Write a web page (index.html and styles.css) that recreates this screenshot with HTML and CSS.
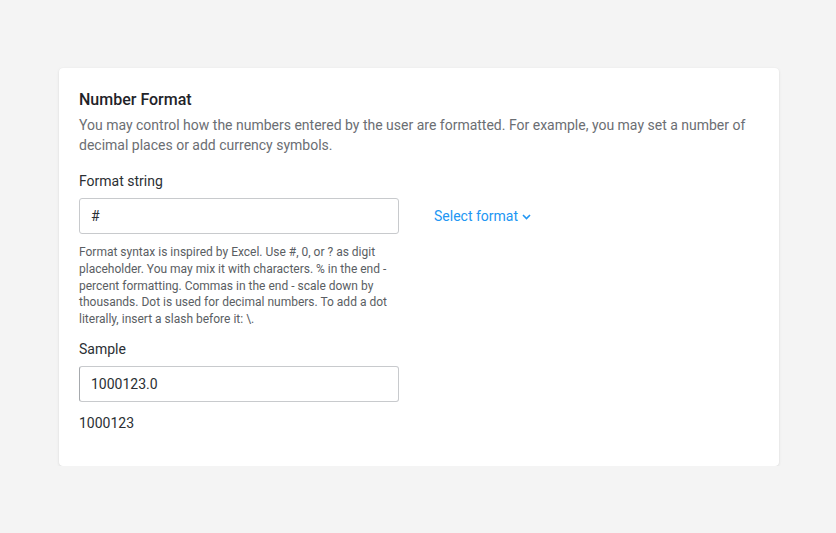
FILE: index.html
```html
<!DOCTYPE html>
<html>
<head>
<meta charset="utf-8">
<link rel="stylesheet" href="styles.css">
</head>
<body>
<div class="page">
  <div class="card">
    <h2 class="title">Number Format</h2>
    <p class="desc">You may control how the numbers entered by the user are formatted. For example, you may set a number of decimal places or add currency symbols.</p>
    <div class="field">
      <label class="label">Format string</label>
      <div class="row">
        <div class="input">#</div>
        <a class="link" href="#">Select format <svg class="chev" width="9" height="6" viewBox="0 0 9 6"><path d="M1 1l3.5 3.5L8 1" fill="none" stroke="currentColor" stroke-width="1.6"/></svg></a>
      </div>
      <p class="help">Format syntax is inspired by Excel. Use #, 0, or ? as digit placeholder. You may mix it with characters. % in the end - percent formatting. Commas in the end - scale down by thousands. Dot is used for decimal numbers. To add a dot literally, insert a slash before it: \.</p>
    </div>
    <div class="field second">
      <label class="label">Sample</label>
      <div class="row">
        <div class="input sample">1000123.0</div>
      </div>
      <div class="result">1000123</div>
    </div>
  </div>
</div>
</body>
</html>
```
FILE: styles.css
```css
html, body {
  margin: 0;
  padding: 0;
  background: #f4f4f4;
  font-family: Roboto, "Liberation Sans", sans-serif;
}
.page {
  padding: 68px 57px 0 59px;
}
.card {
  background: #fff;
  border-radius: 4px;
  box-shadow: 0 1px 3px rgba(0,0,0,0.1), 0 0 1px rgba(0,0,0,0.06);
  padding: 22px 20px 26px 20px;
  height: 350px;
}
.title {
  margin: 0;
  font-size: 16px;
  font-weight: 500;
  color: #1f2329;
  line-height: 20px;
}
.desc {
  margin: 5px 0 0 0;
  font-size: 14px;
  line-height: 20px;
  color: #6b6e73;
}
.field {
  margin-top: 17px;
}
.field.second {
  margin-top: 12px;
}
.label {
  display: block;
  font-size: 14px;
  line-height: 18px;
  color: #2b2f34;
}
.row {
  display: flex;
  align-items: center;
  gap: 35px;
  margin-top: 8px;
}
.input {
  box-sizing: border-box;
  width: 320px;
  height: 36px;
  border: 1px solid #c8cacd;
  border-radius: 3px;
  padding: 0 11px;
  font-size: 14px;
  line-height: 34px;
  color: #2b2f34;
}
.sample {
  border-left-color: #a6a9ad;
}
.link {
  color: #2196f3;
  font-size: 14px;
  text-decoration: none;
  display: flex;
  align-items: center;
  gap: 4px;
}
.chev {
  margin-top: 1px;
}
.help {
  margin: 10px 0 0 0;
  width: 320px;
  font-size: 12px;
  line-height: 16.8px;
  color: #5a5e63;
}
.result {
  margin-top: 12px;
  font-size: 14px;
  line-height: 18px;
  color: #2b2f34;
}
```
